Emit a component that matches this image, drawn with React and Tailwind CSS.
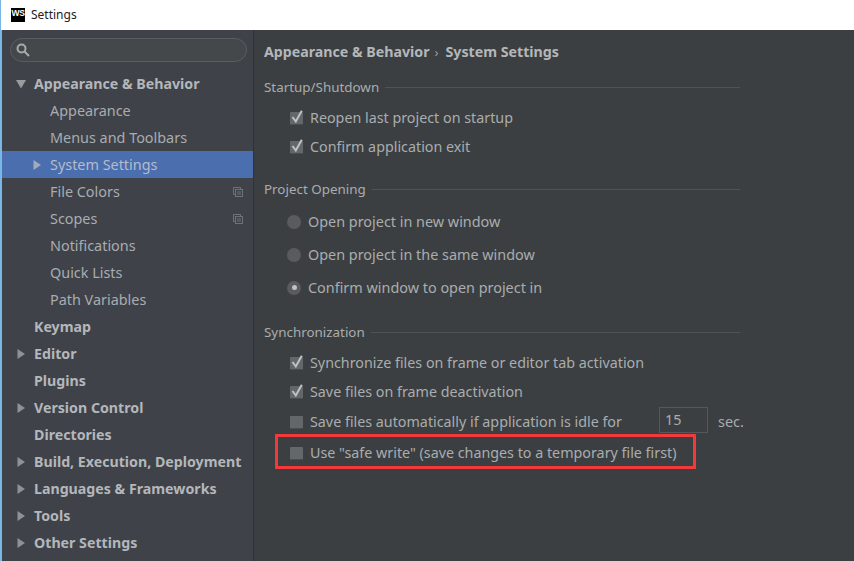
import React from "react";

function Tri({ down, light }) {
  return (
    <svg width="10" height="10" viewBox="0 0 10 10" className="shrink-0">
      {down ? (
        <path d="M0 1 H10 L5 9.5 Z" fill="#9a9da0" />
      ) : (
        <path d="M1.5 0 L9 5 L1.5 10 Z" fill={light ? "#a3a9b8" : "#8f9295"} />
      )}
    </svg>
  );
}

function CopyIcon() {
  return (
    <svg width="10" height="10" viewBox="0 0 10 10" className="shrink-0" fill="none" stroke="#6f7276" strokeWidth="1">
      <path d="M7.5 2.5 V0.5 H0.5 V7.5 H2.5" />
      <rect x="2.5" y="2.5" width="7" height="7" />
      <path d="M4 5 H8 M4 7 H8" />
    </svg>
  );
}

function TreeRow({ label, bold, arrow, selected, copy }) {
  return (
    <div className={`flex items-center h-[27px] shrink-0 relative ${selected ? "bg-[#4b6eaf]" : ""} ${bold ? "pl-[14px]" : "pl-[30px]"}`}>
      <span className="w-[18px] flex items-center shrink-0">
        {arrow === "down" && <Tri down />}
        {arrow === "right" && <Tri light={selected} />}
      </span>
      <span className={`leading-[27px] whitespace-nowrap ${bold ? "text-[14.2px] font-bold text-[#b4b7ba]" : "text-[14.4px]"} ${selected ? "text-[#b4bccb]" : bold ? "" : "text-[#a9adb0]"}`}>
        {label}
      </span>
      {copy && (
        <span className="absolute right-[10px] top-[9px] flex">
          <CopyIcon />
        </span>
      )}
    </div>
  );
}

function Section({ title, children, className }) {
  return (
    <section className={`flex flex-col ${className}`}>
      <div className="flex items-center h-[20px] gap-[6px]">
        <span className="text-[13.4px] text-[#a9adaf] whitespace-nowrap">{title}</span>
        <span className="flex-1 h-px bg-[#505355]" />
      </div>
      {children}
    </section>
  );
}

function Check({ checked, label, className = "" }) {
  return (
    <div className={`flex items-center pl-[25px] h-[29px] ${className}`}>
      <svg width="15" height="16" viewBox="0 0 15 16" className="shrink-0 mr-[6px]">
        <rect x="1" y="2" width="13" height="13" rx="1" fill="#64676a" />
        <rect x="1" y="14" width="13" height="1" fill="#4a4d4f" />
        {checked && <path d="M3.5 7 L6.8 11.5 L12.8 0.8" fill="none" stroke="#bfc2c4" strokeWidth="2" />}
      </svg>
      <span className="text-[14.3px] text-[#a9adaf] whitespace-nowrap">{label}</span>
    </div>
  );
}

function Radio({ checked, label }) {
  return (
    <div className="flex items-center pl-[23px] h-[33px]">
      <span className="w-[14px] h-[14px] rounded-full bg-[#595b5d] flex items-center justify-center mr-[7px] shrink-0">
        {checked && <span className="w-[5px] h-[5px] rounded-full bg-[#c0c2c4]" />}
      </span>
      <span className="text-[14.4px] text-[#a9adaf] whitespace-nowrap">{label}</span>
    </div>
  );
}

export default function App() {
  return (
    <div className="w-[854px] h-[561px] overflow-hidden flex flex-col bg-white font-['Noto_Sans','Open_Sans',sans-serif]">
      <header className="h-[30px] shrink-0 flex items-center pl-[10px] gap-[6px] bg-white border-l border-[#79b8e6]">
        <span className="w-[14px] h-[14px] bg-black text-white text-[8.5px] font-bold leading-[10px] flex justify-center font-['Liberation_Sans',sans-serif] tracking-[-0.4px]">
          WS
        </span>
        <span className="text-[12px] text-[#222]">Settings</span>
      </header>
      <div className="flex-1 flex min-h-0">
        <aside className="w-[254px] shrink-0 bg-[#3f4249] border-l-2 border-l-[#79b8e6] border-r border-r-[#323232] flex flex-col overflow-hidden">
          <div className="pl-[8px] pr-[6px] pt-[8px] pb-[8px] shrink-0">
            <div className="h-[24px] rounded-full border border-[#5a5d5f] bg-[#45484a] flex items-center pl-[5px]">
              <svg width="14" height="14" viewBox="0 0 14 14" fill="none" stroke="#a8abad" strokeWidth="2">
                <circle cx="5.5" cy="5.5" r="4" />
                <path d="M8.5 8.5 L13 13" />
              </svg>
            </div>
          </div>
          <TreeRow label="Appearance & Behavior" bold arrow="down" />
          <TreeRow label="Appearance" />
          <TreeRow label="Menus and Toolbars" />
          <TreeRow label="System Settings" arrow="right" selected />
          <TreeRow label="File Colors" copy />
          <TreeRow label="Scopes" copy />
          <TreeRow label="Notifications" />
          <TreeRow label="Quick Lists" />
          <TreeRow label="Path Variables" />
          <TreeRow label="Keymap" bold />
          <TreeRow label="Editor" bold arrow="right" />
          <TreeRow label="Plugins" bold />
          <TreeRow label="Version Control" bold arrow="right" />
          <TreeRow label="Directories" bold />
          <TreeRow label="Build, Execution, Deployment" bold arrow="right" />
          <TreeRow label="Languages & Frameworks" bold arrow="right" />
          <TreeRow label="Tools" bold arrow="right" />
          <TreeRow label="Other Settings" bold arrow="right" />
        </aside>
        <main className="flex-1 min-w-0 bg-[#3c3f41] pl-[10px] pr-[114px] pt-[11px] flex flex-col">
          <h1 className="text-[14.2px] font-bold text-[#b4b7ba] leading-[22px] whitespace-nowrap flex items-center">
            Appearance &amp; Behavior
            <span className="font-normal ml-[5px] mr-[7px] text-[#9a9da0] text-[13px]">›</span>
            System Settings
          </h1>
          <Section title="Startup/Shutdown" className="mt-[14px]">
            <Check checked label="Reopen last project on startup" className="mt-[6px]" />
            <Check checked label="Confirm application exit" />
          </Section>
          <Section title="Project Opening" className="mt-[18px]">
            <div className="flex flex-col mt-[6px]">
              <Radio label="Open project in new window" />
              <Radio label="Open project in the same window" />
              <Radio checked label="Confirm window to open project in" />
            </div>
          </Section>
          <Section title="Synchronization" className="mt-[18px]">
            <Check checked label="Synchronize files on frame or editor tab activation" className="mt-[6px]" />
            <Check checked label="Save files on frame deactivation" />
            <div className="flex items-center relative mt-px">
              <Check label="Save files automatically if application is idle for" />
              <span className="absolute left-[395px] top-[0px] w-[49px] h-[26px] border border-[#55585a] bg-[#3c3f41] text-[14.4px] text-[#a9adaf] pl-[5px] leading-[24px]">15</span>
              <span className="absolute left-[454px] top-[4px] text-[14.4px] text-[#a9adaf]">sec.</span>
            </div>
            <div className="relative">
              <Check label={'Use "safe write" (save changes to a temporary file first)'} className="mt-[2px]" />
              <div className="absolute left-[11px] top-[-2px] w-[421px] h-[35px] border-[3px] border-[#f23a3a]" />
            </div>
          </Section>
        </main>
      </div>
    </div>
  );
}
